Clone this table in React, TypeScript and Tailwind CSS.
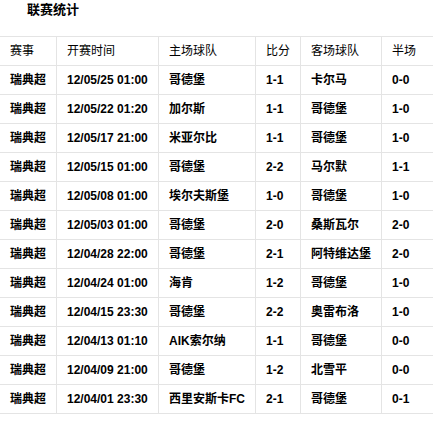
const headers = ["赛事", "开赛时间", "主场球队", "比分", "客场球队", "半场"];

const rows: string[][] = [
  ["瑞典超", "12/05/25 01:00", "哥德堡", "1-1", "卡尔马", "0-0"],
  ["瑞典超", "12/05/22 01:20", "加尔斯", "1-1", "哥德堡", "1-0"],
  ["瑞典超", "12/05/17 21:00", "米亚尔比", "1-1", "哥德堡", "1-0"],
  ["瑞典超", "12/05/15 01:00", "哥德堡", "2-2", "马尔默", "1-1"],
  ["瑞典超", "12/05/08 01:00", "埃尔夫斯堡", "1-0", "哥德堡", "1-0"],
  ["瑞典超", "12/05/03 01:00", "哥德堡", "2-0", "桑斯瓦尔", "2-0"],
  ["瑞典超", "12/04/28 22:00", "哥德堡", "2-1", "阿特维达堡", "2-0"],
  ["瑞典超", "12/04/24 01:00", "海肯", "1-2", "哥德堡", "1-0"],
  ["瑞典超", "12/04/15 23:30", "哥德堡", "2-2", "奥雷布洛", "1-0"],
  ["瑞典超", "12/04/13 01:10", "AIK索尔纳", "1-1", "哥德堡", "0-0"],
  ["瑞典超", "12/04/09 21:00", "哥德堡", "1-2", "北雪平", "0-0"],
  ["瑞典超", "12/04/01 23:30", "西里安斯卡FC", "2-1", "哥德堡", "0-1"],
];

const widths = ["w-[57px]", "w-[102px]", "w-[97px]", "w-[45px]", "w-[81px]", "w-[70px]"];

function Row({ cells, bold }: { cells: string[]; bold?: boolean }) {
  return (
    <div className="flex h-[29px] border-b border-[#e4e4e4]">
      {cells.map((c, i) => (
        <div
          key={i}
          className={`${widths[i]} shrink-0 flex items-center border-r border-[#e4e4e4] pl-[10px] whitespace-nowrap text-[12px] ${
            bold ? "font-bold" : "font-normal"
          }`}
        >
          {c}
        </div>
      ))}
    </div>
  );
}

export default function App() {
  return (
    <div
      className="w-[433px] h-[423px] overflow-hidden bg-white text-[#000]"
      style={{ fontFamily: '"Liberation Sans", Arial, "Noto Sans CJK SC", sans-serif' }}
    >
      <div className="h-[36px] pl-[27px] pt-[2px] text-[13px] font-bold leading-[16px]">联赛统计</div>
      <div className="w-[452px] border-t border-[#e4e4e4]">
        <Row cells={headers} />
        {rows.map((r, i) => (
          <Row key={i} cells={r} bold />
        ))}
      </div>
    </div>
  );
}
